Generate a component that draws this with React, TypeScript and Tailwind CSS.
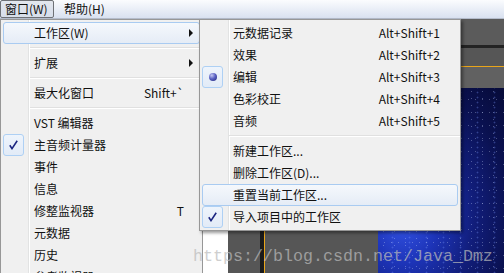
type Entry =
  | { sep: true }
  | {
      sep?: false;
      label: string;
      shortcut?: string;
      arrow?: boolean;
      mark?: "check" | "radio";
      active?: boolean;
    };

const mainItems: Entry[] = [
  { label: "工作区(W)", arrow: true, active: true },
  { sep: true },
  { label: "扩展", arrow: true },
  { sep: true },
  { label: "最大化窗口", shortcut: "Shift+`" },
  { sep: true },
  { label: "VST 编辑器" },
  { label: "主音频计量器", mark: "check" },
  { label: "事件" },
  { label: "信息" },
  { label: "修整监视器", shortcut: "T" },
  { label: "元数据" },
  { label: "历史" },
  { label: "参考监视器" },
];

const subItems: Entry[] = [
  { label: "元数据记录", shortcut: "Alt+Shift+1" },
  { label: "效果", shortcut: "Alt+Shift+2" },
  { label: "编辑", shortcut: "Alt+Shift+3", mark: "radio" },
  { label: "色彩校正", shortcut: "Alt+Shift+4" },
  { label: "音频", shortcut: "Alt+Shift+5" },
  { sep: true },
  { label: "新建工作区..." },
  { label: "删除工作区(D)..." },
  { label: "重置当前工作区...", active: true },
  { label: "导入项目中的工作区", mark: "check" },
];

function Mark({ kind }: { kind?: "check" | "radio" }) {
  if (!kind) return <div className="h-full w-[20px] shrink-0" />;
  return (
    <div className="-my-px -ml-px flex h-[22px] w-[21px] shrink-0 items-center justify-center rounded-[3px] border border-[#aed0f4] bg-gradient-to-b from-[#eef4fc] to-[#e2ebf7]">
      {kind === "check" ? (
        <svg width="9" height="10" viewBox="0 0 9 10">
          <path d="M0.8 5.2 L3 8.6 L8.2 0.8" fill="none" stroke="#1b2580" strokeWidth="1.6" />
        </svg>
      ) : (
        <div className="h-[8px] w-[8px] rounded-full bg-[radial-gradient(circle_at_35%_30%,#c4c8f2_0%,#5a62c4_45%,#1c2176_100%)]" />
      )}
    </div>
  );
}

function Menu({ items, shortcutPad }: { items: Entry[]; shortcutPad: string }) {
  return (
    <div className="flex flex-col p-[2px]">
      {items.map((it, i) =>
        it.sep ? (
          <div key={i} className="-mr-[2px] ml-[27px] h-[8px] pt-[3px]">
            <div className="h-[2px] border-b border-white bg-[#e0e0e0]" />
          </div>
        ) : (
          <div
            key={i}
            className={
              "flex h-[22px] shrink-0 items-center rounded-[3px] border " +
              (it.active
                ? "border-[#a9cbf1] bg-gradient-to-b from-[#f5f8fc] to-[#e5ecf6]"
                : "border-transparent")
            }
          >
            <Mark kind={it.mark} />
            <span className="ml-[10px] flex-1 whitespace-nowrap">{it.label}</span>
            {it.shortcut && <span className={shortcutPad}>{it.shortcut}</span>}
            {it.arrow && (
              <svg width="4" height="8" viewBox="0 0 4 8" className="mr-[6px]">
                <polygon points="0,0 4,4 0,8" fill="#111" />
              </svg>
            )}
          </div>
        )
      )}
    </div>
  );
}

export default function App() {
  return (
    <div className="relative h-[273px] w-[504px] overflow-hidden bg-white font-['Noto_Sans_CJK_SC',sans-serif] text-[12px] text-[#111]">
      {/* menu bar */}
      <div className="flex h-[19px] items-start border-b border-[#b4bccb] bg-gradient-to-b from-[#fbfcfe] to-[#d9e1f0]">
        <div className="flex h-[18px] w-[54px] items-center rounded-[2px] border border-[#6e7176] bg-gradient-to-b from-[#e3e7ee] to-[#d7deea] pl-[4px]">
          窗口(W)
        </div>
        <div className="ml-[10px] flex h-[18px] items-center">帮助(H)</div>
      </div>

      <div className="flex h-[254px]">
        {/* main dropdown */}
        <div className="w-[203px] shrink-0 overflow-hidden border border-b-0 border-[#979797] bg-[linear-gradient(to_right,#f0f0f0_27px,#e2e3e3_27px,#e2e3e3_28px,#ffffff_28px,#ffffff_29px,#f0f0f0_29px)]">
          <Menu items={mainItems} shortcutPad="mr-[15px]" />
        </div>

        {/* application behind */}
        <div className="relative flex flex-1">
          <div className="w-[25px] shrink-0 bg-white" />
          <div className="flex flex-1 flex-col">
            <div className="h-[26px] bg-[#5b5b5b]" />
            <div className="h-[3px] bg-[#232323]" />
            <div className="h-[18px] bg-[#565656]" />
            <div className="h-px bg-[#e9a51a]" />
            <div className="h-[21px] bg-[#616161]" />
            <div className="flex flex-1">
              <div className="flex w-[150px] bg-[#565656]">
                <div className="ml-[32px] w-[4px] bg-[#1b1b1b]" />
                <div className="w-[1px] bg-[#e9a51a]" />
              </div>
              <div className="flex-1 bg-[radial-gradient(circle,rgba(200,215,255,0.35)_0.5px,transparent_1px),radial-gradient(circle,rgba(220,230,255,0.3)_0.5px,transparent_1px),radial-gradient(circle,rgba(120,150,255,0.35)_0.6px,transparent_1.2px),radial-gradient(ellipse_at_20%_70%,#3556e8_0%,#1d34b8_25%,#111d7a_50%,#0a1150_75%,#070b38_100%)] [background-position:0_0,3px_5px,6px_2px,0_0] [background-size:11px_7px,7px_13px,17px_5px,100%_100%]" />
            </div>
          </div>

          {/* submenu */}
          <div className="absolute left-[-4px] top-0 h-[212px] w-[262px] border border-[#979797] bg-[linear-gradient(to_right,#f0f0f0_28px,#e2e3e3_28px,#e2e3e3_29px,#ffffff_29px,#ffffff_30px,#f0f0f0_30px)] shadow-[2px_2px_3px_rgba(0,0,0,0.4)]">
            <Menu items={subItems} shortcutPad="mr-[17px]" />
          </div>
        </div>
      </div>

      {/* watermark */}
      <div className="pointer-events-none absolute left-[193px] top-[249px] whitespace-nowrap font-['Liberation_Mono',monospace] text-[16.67px] leading-none text-[#bbbbbb] opacity-70">
        https://blog.csdn.net/Java_Dmz
      </div>
    </div>
  );
}
